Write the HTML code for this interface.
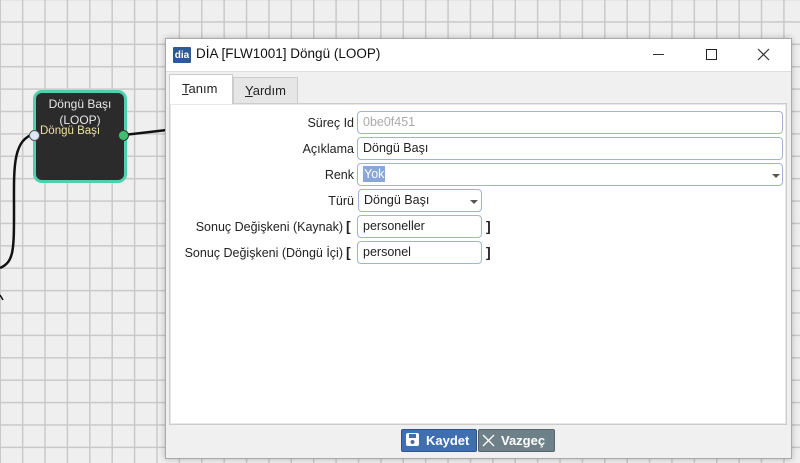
<!DOCTYPE html>
<html><head><meta charset="utf-8"><style>
*{margin:0;padding:0;box-sizing:border-box}
body{width:800px;height:463px;overflow:hidden;position:relative;font-family:"Liberation Sans","DejaVu Sans",sans-serif;font-size:12.5px;color:#222;
background-color:#efefef;
background-image:linear-gradient(to right,#c9c9c9 0,#c9c9c9 1.5px,transparent 1.5px),linear-gradient(to bottom,#c9c9c9 0,#c9c9c9 1.5px,transparent 1.5px);
background-size:22.4px 22.4px;background-position:-0.5px -1.2px}
.a{position:absolute}
.node{left:33px;top:90px;width:94px;height:93px;background:#2b2b2b;border:3px solid #4fcfae;border-radius:9px;color:#e8e8e8;text-align:center;font-size:12px;line-height:16px;padding-top:3px}
.lbl{position:absolute;text-align:right;white-space:nowrap}
.fld{position:absolute;background:#fff;border:1px solid #9fb4d8;border-radius:4px;height:23px;padding-left:5px;line-height:21px;white-space:nowrap}
.arr{position:absolute;width:0;height:0;border-left:4px solid transparent;border-right:4px solid transparent;border-top:4px solid #555}
.br{position:absolute;font-weight:bold;font-size:14px}
</style></head><body>
<svg class="a" style="left:0;top:0" width="800" height="463">
<path d="M0 268 C14 262 14 250 14 210 C14 170 12 140 34 134" stroke="#111" stroke-width="2.5" fill="none"/>
<path d="M124 135 L167 130" stroke="#111" stroke-width="2.5" fill="none"/>
<path d="M0 295 L3 300" stroke="#111" stroke-width="1.5"/>
</svg>
<div class="a node">Döngü Başı<br>(LOOP)</div>
<div class="a" style="left:40px;top:125px;color:#f0e0a0;font-size:11.5px">Döngü Başı</div>
<div class="a" style="left:29px;top:130px;width:11px;height:11px;border-radius:50%;background:#dce8f5;border:1px solid #555"></div>
<div class="a" style="left:118px;top:130px;width:11px;height:11px;border-radius:50%;background:#3cc070;border:1px solid #333"></div>

<div class="a" style="left:165px;top:38px;width:627px;height:421px;background:#f0f0f0;border:1px solid #aaa;box-shadow:0 0 6px rgba(0,0,0,.25)"></div>
<div class="a" style="left:166px;top:39px;width:625px;height:33px;background:#fff;border-bottom:1px solid #ddd"></div>
<div class="a" style="left:173px;top:47px;width:18px;height:16px;background:#2c5a96;color:#fff;font-size:10px;font-weight:bold;line-height:17px;text-align:center;border-radius:1px">dia</div>
<div class="a" style="left:196px;top:46px;font-size:13.5px;color:#111">DİA [FLW1001] Döngü (LOOP)</div>
<div class="a" style="left:653px;top:54px;width:11px;height:1px;background:#333"></div>
<div class="a" style="left:706px;top:49px;width:11px;height:11px;border:1px solid #222"></div>
<svg class="a" style="left:757px;top:48px" width="13" height="13"><path d="M1 1 L12 12 M12 1 L1 12" stroke="#333" stroke-width="1.2"/></svg>

<div class="a" style="left:233px;top:77px;width:65px;height:26px;background:#e6e6e6;border:1px solid #ccc;border-bottom:none"></div>
<div class="a" style="left:245px;top:83px;font-size:13px"><u>Y</u>ardım</div>
<div class="a" style="left:169px;top:74px;width:64px;height:30px;background:#fff;border:1px solid #ccc;border-bottom:none;z-index:2"></div>
<div class="a" style="left:182px;top:81px;font-size:13px;z-index:3"><u>T</u>anım</div>
<div class="a" style="left:169px;top:103px;width:618px;height:322px;background:#fff;border:1px solid #ccc;box-shadow:inset 0 0 0 1px #e8e8e8"></div>

<div class="lbl" style="right:446px;top:116px">Süreç Id</div>
<div class="fld" style="left:357px;top:111px;width:426px;color:#aaa">0be0f451</div>
<div class="lbl" style="right:446px;top:142px">Açıklama</div>
<div class="fld" style="left:357px;top:137px;width:426px">Döngü Başı</div>
<div class="lbl" style="right:446px;top:168px">Renk</div>
<div class="fld" style="left:357px;top:163px;width:426px"><span style="background:#8aa6d6;color:#fff;padding:1px 1px">Yok</span></div>
<div class="arr" style="left:772px;top:174px"></div>
<div class="lbl" style="right:446px;top:194px">Türü</div>
<div class="fld" style="left:358px;top:189px;width:124px">Döngü Başı</div>
<div class="arr" style="left:470px;top:200px"></div>
<div class="lbl" style="right:457px;top:220px">Sonuç Değişkeni (Kaynak)</div>
<div class="br" style="left:346px;top:218px">[</div>
<div class="fld" style="left:357px;top:215px;width:125px">personeller</div>
<div class="br" style="left:486px;top:218px">]</div>
<div class="lbl" style="right:457px;top:246px">Sonuç Değişkeni (Döngü İçi)</div>
<div class="br" style="left:346px;top:244px">[</div>
<div class="fld" style="left:357px;top:241px;width:125px">personel</div>
<div class="br" style="left:486px;top:244px">]</div>

<div class="a" style="left:401px;top:429px;width:76px;height:23px;background:#3f6fb0;border:1px solid #2d558c;border-radius:2px;color:#fff;font-weight:bold;font-size:13px;line-height:21px;padding-left:24px">Kaydet</div>
<svg class="a" style="left:406px;top:433px" width="14" height="14"><rect x="0" y="0" width="13" height="13" rx="2" fill="#fff"/><rect x="3" y="1" width="7" height="4" fill="#3f6fb0"/><circle cx="6.5" cy="9" r="2" fill="#3f6fb0"/></svg>
<div class="a" style="left:478px;top:429px;width:77px;height:23px;background:#6f8188;border:1px solid #56666c;border-radius:2px;color:#fff;font-weight:bold;font-size:13px;line-height:21px;padding-left:22px">Vazgeç</div>
<svg class="a" style="left:482px;top:434px" width="13" height="13"><path d="M1 1 L12 12 M12 1 L1 12" stroke="#fff" stroke-width="1.3"/></svg>
</body></html>
